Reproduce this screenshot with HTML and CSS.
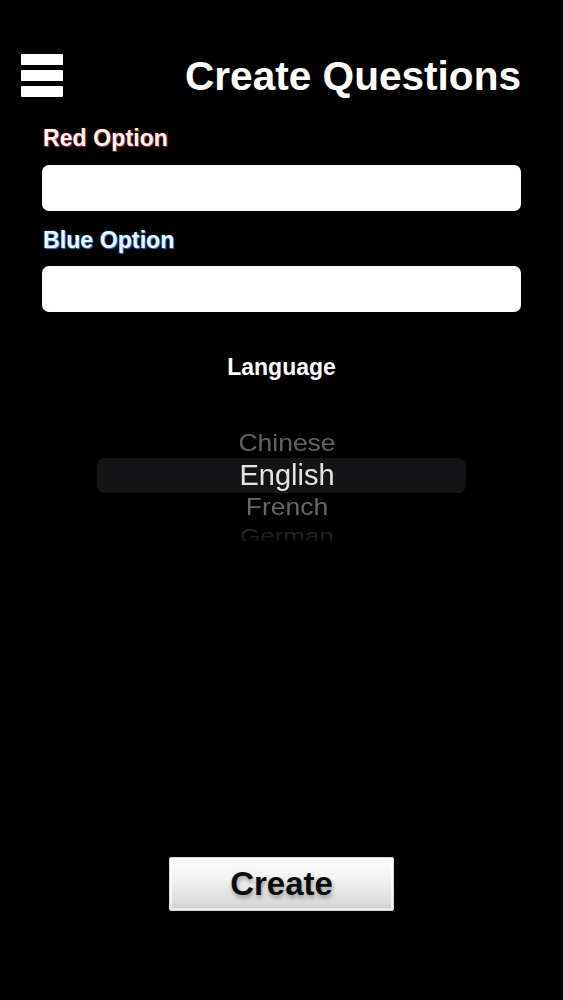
FILE: index.html
```html
<!DOCTYPE html>
<html lang="en">
<head>
<meta charset="utf-8">
<title>Create Questions</title>
<link rel="stylesheet" href="styles.css">
</head>
<body>
<div class="screen">
  <header class="header">
    <div class="menu" aria-label="Menu">
      <span class="bar"></span>
      <span class="bar"></span>
      <span class="bar"></span>
    </div>
    <h1 class="title">Create Questions</h1>
  </header>

  <section class="form">
    <label class="label label-red">Red Option</label>
    <input class="field" type="text">
    <label class="label label-blue">Blue Option</label>
    <input class="field" type="text">
  </section>

  <div class="lang-title">Language</div>

  <div class="picker">
    <div class="row row-near">Chinese</div>
    <div class="row row-selected">English</div>
    <div class="row row-near row-below">French</div>
    <div class="row row-far">German</div>
  </div>

  <div class="actions">
    <button class="create-btn" type="button">Create</button>
  </div>
</div>
</body>
</html>
```

FILE: styles.css
```css
html, body {
  margin: 0;
  padding: 0;
  background: #000;
}

body {
  font-family: "Liberation Sans", Arial, Helvetica, sans-serif;
  color: #fff;
}

.screen {
  width: 563px;
  display: flex;
  flex-direction: column;
}

.header {
  display: flex;
  justify-content: space-between;
  align-items: flex-start;
  padding: 54px 42px 0 21px;
}

.menu {
  display: flex;
  flex-direction: column;
  gap: 5px;
  width: 42px;
}

.bar {
  display: block;
  height: 11px;
  background: #fff;
  border-radius: 1px;
}

.title {
  margin: 1px 0 0 0;
  font-size: 40.6px;
  line-height: 43px;
  font-weight: 700;
  color: #fff;
}

.form {
  display: flex;
  flex-direction: column;
  padding: 27px 42px 0 43px;
}

.label {
  display: block;
  font-size: 23px;
  line-height: 26px;
  font-weight: 700;
  letter-spacing: 0.1px;
}

.label-red {
  color: #fff4f4;
  text-shadow: 1px 1px 1px #b02a2a, 0 0 2px #7a1c1c;
}

.label-blue {
  color: #eef7ff;
  margin-top: 16px;
  text-shadow: 1px 1px 1px #2f7fd8, 0 0 2px #1d5aa0;
}

.field {
  display: block;
  box-sizing: border-box;
  width: 479px;
  height: 46px;
  margin-top: 14px;
  margin-left: -1px;
  border: none;
  border-radius: 7px;
  background: #fff;
  padding: 0 10px;
  font-size: 18px;
  outline: none;
}

.label-blue + .field {
  margin-top: 13px;
}

.lang-title {
  margin-top: 42px;
  text-align: center;
  font-size: 23px;
  line-height: 26px;
  font-weight: 700;
  color: #fff;
}

.picker {
  margin-top: 48px;
  height: 113px;
  overflow: hidden;
  display: flex;
  flex-direction: column;
  align-items: center;
  -webkit-mask-image: linear-gradient(to bottom, #000 0%, #000 86%, rgba(0,0,0,0.3) 100%);
  mask-image: linear-gradient(to bottom, #000 0%, #000 86%, rgba(0,0,0,0.3) 100%);
}

.row {
  box-sizing: border-box;
  width: 369px;
  display: flex;
  align-items: center;
  justify-content: center;
  padding-left: 11px;
  flex-shrink: 0;
  font-family: "Liberation Sans", Arial, sans-serif;
}

.row-near {
  height: 30px;
  font-size: 26.5px;
  color: #626262;
  transform: scaleY(0.88);
}

.row-below {
  height: 28px;
  color: #666;
}

.row-selected {
  height: 35px;
  font-size: 29px;
  color: #e4e4e4;
  background: #141416;
  border-radius: 8px;
}

.row-far {
  height: 28px;
  padding-top: 3px;
  font-size: 26px;
  color: #3c3c3c;
  transform: scaleY(0.75);
}

.actions {
  display: flex;
  justify-content: center;
  margin-top: 316px;
}

.create-btn {
  box-sizing: border-box;
  width: 225px;
  height: 54px;
  padding: 0;
  border: 1px solid #d8d8d8;
  border-radius: 2px;
  background: linear-gradient(to bottom, #fdfdfd 0%, #f2f2f2 40%, #dcdcdc 85%, #c8c8c8 100%);
  box-shadow: inset 0 0 0 2px rgba(255,255,255,0.6);
  font-family: "Liberation Sans", Arial, sans-serif;
  font-size: 33px;
  font-weight: 700;
  color: #0c0c0c;
  text-shadow: 1px 3px 4px rgba(0,0,0,0.35);
  cursor: pointer;
}
```
